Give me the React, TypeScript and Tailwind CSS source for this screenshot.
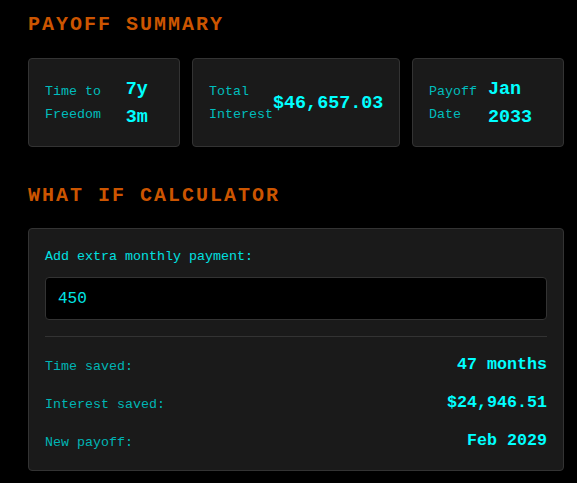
import React from "react";

const Card = ({ label, value }: { label: string; value: string }) => (
  <div className="flex items-center rounded border border-[#333333] bg-[#1a1a1a] px-4 pt-[17px] pb-[15px]">
    <div className="text-[13.33px] leading-[1.7] text-[#00bdbd]">{label}</div>
    <div className="text-[18.4px] leading-[1.5] font-bold text-[#00ffff]">{value}</div>
  </div>
);

const Row = ({ label, value }: { label: string; value: string }) => (
  <div className="flex items-start justify-between">
    <div className="pt-[5px] text-[13.33px] leading-[20px] text-[#00b5b5]">{label}</div>
    <div className="text-[16.67px] leading-[26px] font-bold text-[#00ffff]">{value}</div>
  </div>
);

export default function App() {
  return (
    <div className="min-h-screen bg-black pl-[28px] pr-[13px] pt-[11px] font-['Liberation_Mono',monospace]">
      <h2 className="text-[20px] leading-[28px] font-bold tracking-[2px] text-[#cc5500]">PAYOFF SUMMARY</h2>
      <div className="mt-[19px] grid grid-cols-[152px_208px_152px] gap-3">
        <Card label="Time to Freedom" value="7y 3m" />
        <Card label="Total Interest" value="$46,657.03" />
        <Card label="Payoff Date" value="Jan 2033" />
      </div>
      <h2 className="mt-[35px] text-[20px] leading-[28px] font-bold tracking-[2px] text-[#cc5500]">WHAT IF CALCULATOR</h2>
      <div className="mt-[18px] rounded border border-[#333333] bg-[#1a1a1a] p-4">
        <div className="text-[13.33px] leading-[24px] text-[#00e0e0]">Add extra monthly payment:</div>
        <input
          readOnly
          value="450"
          className="mt-[8px] block h-[43px] w-full rounded border border-[#333333] bg-black px-3 text-[16px] text-[#00e5e5] outline-none font-['Liberation_Mono',monospace]"
        />
        <div className="mt-4 flex flex-col gap-3 border-t border-[#333333] pt-[15px]">
          <Row label="Time saved:" value="47 months" />
          <Row label="Interest saved:" value="$24,946.51" />
          <Row label="New payoff:" value="Feb 2029" />
        </div>
      </div>
    </div>
  );
}
